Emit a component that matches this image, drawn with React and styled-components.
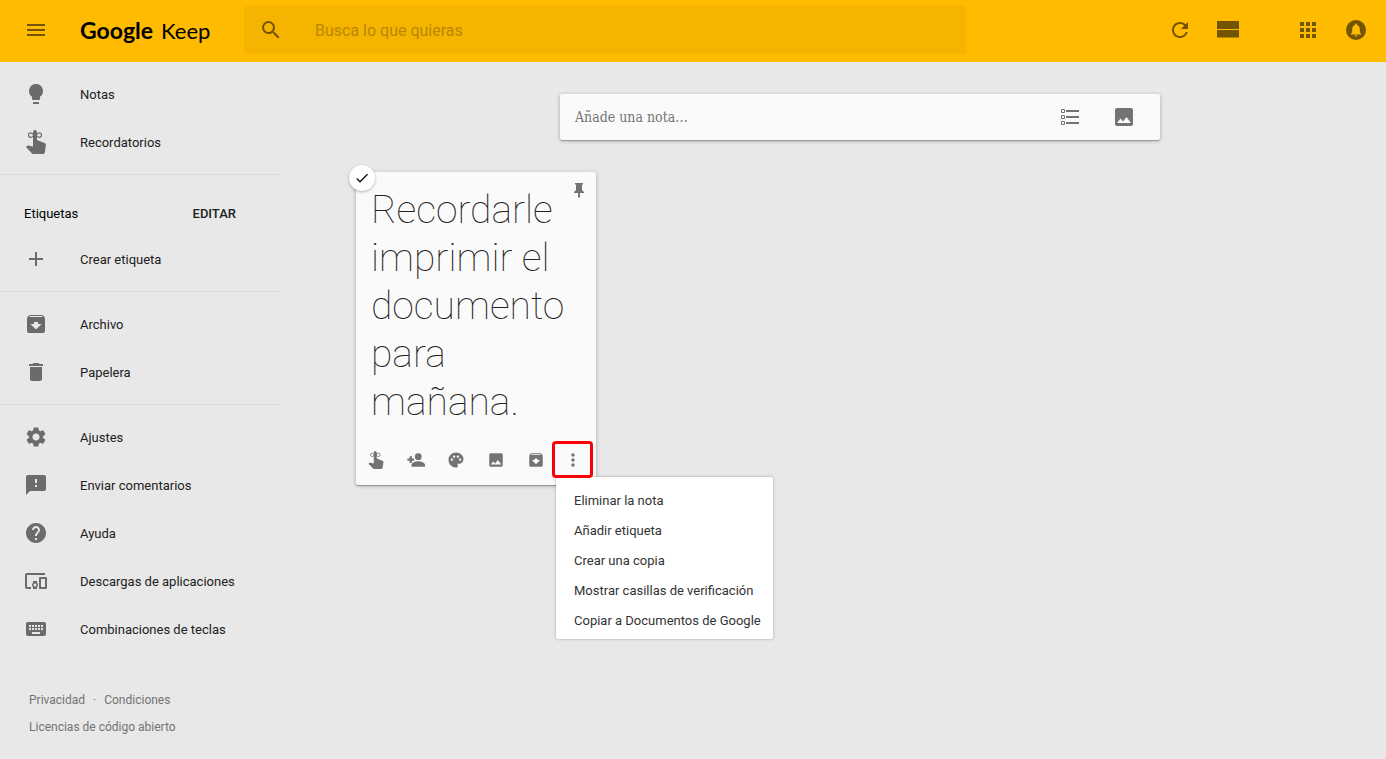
import styled, { createGlobalStyle, css } from "styled-components";
import {
  MdMenu,
  MdSearch,
  MdRefresh,
  MdApps,
  MdDelete,
  MdSettings,
  MdFeedback,
  MdHelp,
  MdDevicesOther,
  MdKeyboard,
  MdAdd,
  MdPalette,
  MdImage,
  MdMoreVert,
  MdCheck,
} from "react-icons/md";

const GlobalStyle = createGlobalStyle`
  * {
    box-sizing: border-box;
  }
  body {
    margin: 0;
    background: #e8e8e8;
    color: #212121;
    font-family: Roboto, Arial, sans-serif;
    font-size: 13px;
  }
  button, input {
    margin: 0;
    padding: 0;
    border: 0;
    background: none;
    color: inherit;
    font: inherit;
    outline: 0;
  }
  a {
    color: inherit;
    text-decoration: none;
  }
  ul {
    margin: 0;
    padding: 0;
    list-style: none;
  }
  svg {
    display: block;
    flex: none;
  }
`;

const Header = styled.header`
  display: flex;
  align-items: center;
  height: 62px;
  padding: 0 18px 2px 24px;
  background: #ffbb00;
  color: #735400;
`;

const IconButton = styled.button`
  display: flex;
  align-items: center;
  justify-content: center;
  flex: none;
  width: ${({ $size }) => $size || 24}px;
  height: ${({ $size }) => $size || 24}px;
  cursor: pointer;
`;

const Logo = styled.a`
  display: flex;
  align-items: baseline;
  gap: 8px;
  width: 164px;
  margin-left: 32px;
  color: #000;
  font-family: Lato, sans-serif;
  font-size: 22px;
  line-height: 32px;
`;

const LogoBrand = styled.span`
  font-size: 23px;
  font-weight: 700;
`;

const SearchForm = styled.form`
  display: flex;
  align-items: center;
  flex: 1;
  max-width: 722px;
  height: 48px;
  padding-left: 15px;
  border-radius: 4px;
  background: #f5b400;
`;

const SearchInput = styled.input`
  flex: 1;
  margin-left: 32px;
  height: 48px;
  font-size: 16px;
  &::placeholder {
    color: #b88700;
    opacity: 1;
  }
`;

const HeaderActions = styled.div`
  display: flex;
  align-items: center;
  gap: 24px;
  margin-left: auto;
`;

const ActionGroup = styled.div`
  display: flex;
  gap: 24px;
  margin-right: 32px;
`;

const Layout = styled.div`
  display: flex;
`;

const Sidebar = styled.nav`
  flex: none;
  width: 280px;
`;

const MenuSection = styled.section`
  padding: 8px 0;
  border-bottom: ${({ $last }) => ($last ? "0" : "1px solid #dadada")};
`;

const MenuItem = styled.a`
  display: flex;
  align-items: center;
  gap: 32px;
  height: 48px;
  padding-left: 24px;
  svg {
    color: #6b6b6b;
  }
`;

const LabelsHead = styled.div`
  display: flex;
  align-items: center;
  justify-content: space-between;
  height: 52px;
  padding: 8px 44px 0 24px;
  color: #000;
`;

const EditButton = styled.button`
  color: #212121;
  font-weight: 500;
  cursor: pointer;
`;

const Footer = styled.footer`
  padding: 26px 0 0 29px;
  color: #737373;
  font-size: 12px;
  line-height: 27px;
`;

const FooterRow = styled.div`
  display: flex;
  gap: 8px;
`;

const Main = styled.main`
  flex: 1;
  padding: 32px 0 32px 54px;
`;

const paper = css`
  border-radius: 2px;
  background: #fafafa;
  box-shadow: 0 1px 4px rgba(0, 0, 0, 0.25), 0 1px 1px rgba(0, 0, 0, 0.25);
`;

const NoteInputBar = styled.div`
  ${paper}
  display: flex;
  align-items: center;
  max-width: 600px;
  height: 46px;
  margin: 0 auto 32px;
  padding: 0 24px 0 15px;
  color: #737373;
`;

const NoteInput = styled.input`
  flex: 1;
  height: 44px;
  font-family: "Roboto Slab", "DejaVu Serif Condensed", "DejaVu Serif", serif;
  font-size: 14px;
  &::placeholder {
    color: #757575;
    opacity: 1;
  }
`;

const BarIcons = styled.div`
  display: flex;
  gap: 30px;
`;

const NoteCard = styled.article`
  ${paper}
  position: relative;
  width: 240px;
  margin-left: 22px;
`;

const NoteText = styled.p`
  margin: 0;
  padding: 14px 15px 0;
  color: #212121;
  font-family: "Roboto Slab", Roboto, sans-serif;
  font-size: 39px;
  font-weight: 100;
  line-height: 48px;
`;

const SelectBadge = styled.button`
  position: absolute;
  top: -7px;
  left: -7px;
  display: flex;
  align-items: center;
  justify-content: center;
  width: 26px;
  height: 26px;
  border-radius: 50%;
  background: #fff;
  color: #111;
  box-shadow: 0 1px 3px rgba(0, 0, 0, 0.3);
`;

const PinButton = styled(IconButton)`
  position: absolute;
  top: 9px;
  right: 8px;
  color: #737373;
`;

const NoteToolbar = styled.div`
  display: flex;
  align-items: center;
  gap: 22px;
  height: 59px;
  padding: 9px 0 0 11px;
  color: #737373;
`;

const MoreButton = styled.button`
  position: absolute;
  right: 3px;
  bottom: 7px;
  display: flex;
  align-items: center;
  justify-content: center;
  width: 41px;
  height: 37px;
  border: 3px solid #fb0007;
  border-radius: 4px;
  z-index: 2;
  cursor: pointer;
`;

const DropMenu = styled.ul`
  position: absolute;
  top: 305px;
  left: 200px;
  padding: 8px 0 4px;
  border-radius: 2px;
  background: #fff;
  box-shadow: 0 0 3px rgba(0, 0, 0, 0.3);
  z-index: 1;
`;

const DropItem = styled.button`
  display: block;
  width: 100%;
  height: 30px;
  padding: 0 12px 0 18px;
  color: #333;
  text-align: left;
  white-space: nowrap;
  cursor: pointer;
`;

const BulbIcon = ({ size = 24 }) => (
  <svg width={size} height={size} viewBox="0 0 24 24" fill="currentColor">
    <path d="M12 2a7 7 0 0 0-4 12.740V17a1 1 0 0 0 1 1h6a1 1 0 0 0 1-1v-2.260A7 7 0 0 0 12 2zM9 20h6v2H9z" />
  </svg>
);

// finger with a ribbon tied round it
const ReminderIcon = ({ size = 24 }) => (
  <svg width={size} height={size} viewBox="0 0 24 24" fill="currentColor">
    <path d="M9 10V2a2 2 0 0 1 4 0v8l7.600 2.900a2 2 0 0 1 1.300 2.200l-1 7a2 2 0 0 1-2 1.900H9.500a2 2 0 0 1-1.500-.600L2 17l1-1.100a1.600 1.600 0 0 1 1.500-.400L9 16.500z" />
    <path
      d="M10 5.500C8 2 4.500 2.200 4.500 5s3.500 3.500 5.500 0zM12 5.500c2-3.500 5.500-3.300 5.500-.500s-3.500 3.500-5.500 0z"
      fill="none"
      stroke="currentColor"
      strokeWidth="1.200"
    />
  </svg>
);

const PersonAddIcon = ({ size = 24 }) => (
  <svg width={size} height={size} viewBox="0 0 24 24" fill="currentColor">
    <circle cx="15" cy="7.500" r="4.500" />
    <path d="M15 13.500c-3.300 0-9 1.700-9 5V21h18v-2.500c0-3.300-5.700-5-9-5zM6.500 10V7h-3v3h-3v3h3v3h3v-3h3v-3z" />
  </svg>
);

const ArchiveIcon = ({ size = 24 }) => (
  <svg width={size} height={size} viewBox="0 0 24 24" fill="currentColor">
    <path
      fillRule="evenodd"
      d="M20.540 5.230l-1.390-1.680C18.880 3.210 18.470 3 18 3H6c-.470 0-.880.210-1.160.550L3.460 5.230C3.170 5.570 3 6.020 3 6.500V19c0 1.100.900 2 2 2h14c1.100 0 2-.900 2-2V6.500c0-.480-.170-.930-.460-1.270zM12 17.500L6.500 12H10v-2h4v2h3.500L12 17.500zM5.120 5l.810-1h12l.940 1H5.120z"
    />
  </svg>
);

const StreamIcon = () => (
  <svg width="24" height="24" viewBox="0 0 24 24" fill="currentColor">
    <path d="M1 3h22v8H1zM1 12h22v7.500H1z" />
  </svg>
);

const BellIcon = () => (
  <svg width="24" height="24" viewBox="0 0 24 24" fill="currentColor">
    <path
      fillRule="evenodd"
      d="M12 2a10 10 0 1 0 0 20 10 10 0 0 0 0-20zM12 18.500a1.500 1.500 0 0 1-1.500-1.300h3A1.500 1.500 0 0 1 12 18.500zM17 16.500H7v-1l1.200-1.200V11c0-2 1-3.600 2.900-4.100v-.400a.9.9 0 0 1 1.800 0v.400c1.900.500 2.900 2.100 2.900 4.100v3.300L17 15.500z"
    />
  </svg>
);

const ListIcon = () => (
  <svg width="24" height="24" viewBox="0 0 24 24" fill="currentColor">
    <path d="M8 5h13v2H8zM8 11h13v2H8zM8 17h13v2H8z" />
    <path
      d="M3.500 4.500h3v3h-3zM3.500 10.500h3v3h-3zM3.500 16.500h3v3h-3z"
      fill="none"
      stroke="currentColor"
    />
  </svg>
);

const PinIcon = () => (
  <svg width="18" height="18" viewBox="0 0 18 18" fill="currentColor">
    <path d="M5 2h8v1l-1 1v5l2 2v1h-4v4l-1 1-1-1v-4H4v-1l2-2V4L5 3z" />
  </svg>
);

const sections = [
  [
    { text: "Notas", icon: BulbIcon },
    { text: "Recordatorios", icon: ReminderIcon },
  ],
  [{ text: "Crear etiqueta", icon: MdAdd }],
  [
    { text: "Archivo", icon: ArchiveIcon },
    { text: "Papelera", icon: MdDelete },
  ],
  [
    { text: "Ajustes", icon: MdSettings },
    { text: "Enviar comentarios", icon: MdFeedback },
    { text: "Ayuda", icon: MdHelp },
    { text: "Descargas de aplicaciones", icon: MdDevicesOther },
    { text: "Combinaciones de teclas", icon: MdKeyboard },
  ],
];

const noteTools = [
  { label: "Recordármelo", icon: ReminderIcon },
  { label: "Colaborador", icon: PersonAddIcon },
  { label: "Cambiar color", icon: MdPalette },
  { label: "Añadir imagen", icon: MdImage },
  { label: "Archivar", icon: ArchiveIcon },
];

const menuOptions = [
  "Eliminar la nota",
  "Añadir etiqueta",
  "Crear una copia",
  "Mostrar casillas de verificación",
  "Copiar a Documentos de Google",
];

const App = () => {
  return (
    <>
      <GlobalStyle />
      <Header>
        <IconButton aria-label="Menú">
          <MdMenu size={24} />
        </IconButton>
        <Logo href="#">
          <LogoBrand>Google</LogoBrand>
          <span>Keep</span>
        </Logo>
        <SearchForm>
          <IconButton type="button" aria-label="Buscar">
            <MdSearch size={24} />
          </IconButton>
          <SearchInput aria-label="Buscar" placeholder="Busca lo que quieras" />
        </SearchForm>
        <HeaderActions>
          <ActionGroup>
            <IconButton aria-label="Actualizar">
              <MdRefresh size={24} />
            </IconButton>
            <IconButton aria-label="Vista de lista">
              <StreamIcon />
            </IconButton>
          </ActionGroup>
          <IconButton aria-label="Aplicaciones">
            <MdApps size={24} />
          </IconButton>
          <IconButton aria-label="Notificaciones">
            <BellIcon />
          </IconButton>
        </HeaderActions>
      </Header>
      <Layout>
        <Sidebar>
          {sections.map((items, i) => (
            <MenuSection key={i} $last={i === sections.length - 1}>
              {i === 1 && (
                <LabelsHead>
                  <span>Etiquetas</span>
                  <EditButton>EDITAR</EditButton>
                </LabelsHead>
              )}
              {items.map(({ text, icon: Icon }) => (
                <MenuItem href="#" key={text}>
                  <Icon size={24} />
                  {text}
                </MenuItem>
              ))}
            </MenuSection>
          ))}
          <Footer>
            <FooterRow>
              <a href="#">Privacidad</a>
              <span>·</span>
              <a href="#">Condiciones</a>
            </FooterRow>
            <a href="#">Licencias de código abierto</a>
          </Footer>
        </Sidebar>
        <Main>
          <NoteInputBar>
            <NoteInput aria-label="Añade una nota" placeholder="Añade una nota…" />
            <BarIcons>
              <IconButton aria-label="Nueva lista">
                <ListIcon />
              </IconButton>
              <IconButton aria-label="Nueva nota con imagen">
                <MdImage size={24} />
              </IconButton>
            </BarIcons>
          </NoteInputBar>
          <NoteCard>
            <SelectBadge aria-label="Seleccionar nota">
              <MdCheck size={16} />
            </SelectBadge>
            <PinButton $size={18} aria-label="Fijar nota">
              <PinIcon />
            </PinButton>
            <NoteText>Recordarle imprimir el documento para mañana.</NoteText>
            <NoteToolbar>
              {noteTools.map(({ label, icon: Icon }) => (
                <IconButton $size={18} key={label} aria-label={label}>
                  <Icon size={18} />
                </IconButton>
              ))}
              <MoreButton aria-label="Más">
                <MdMoreVert size={20} />
              </MoreButton>
            </NoteToolbar>
            <DropMenu>
              {menuOptions.map((option) => (
                <li key={option}>
                  <DropItem>{option}</DropItem>
                </li>
              ))}
            </DropMenu>
          </NoteCard>
        </Main>
      </Layout>
    </>
  );
};

export default App;
